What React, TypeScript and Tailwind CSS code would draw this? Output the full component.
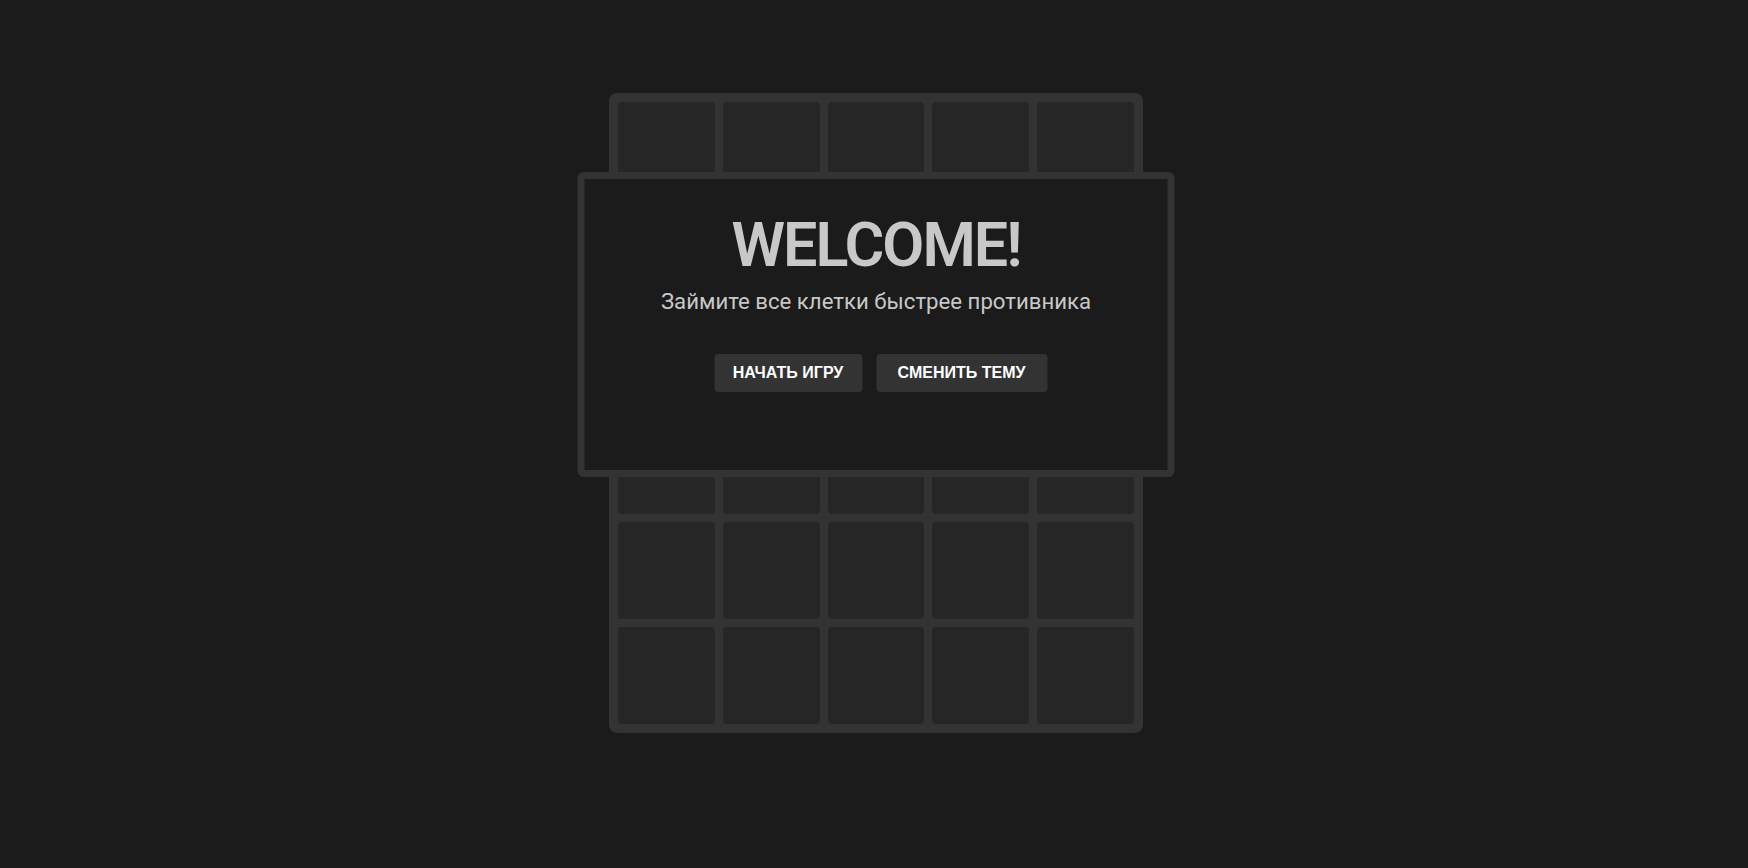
import React from 'react';

const rows = 6;
const cols = 5;

const App: React.FC = () => {
  const cells = Array.from({ length: rows * cols }, (_, i) => i);

  return (
    <div
      className="min-h-screen w-full bg-[#1b1b1b] flex justify-center pl-[4px]"
      style={{ fontFamily: 'Roboto, "Noto Sans", sans-serif' }}
    >
      <div className="relative mt-[93px]">
        {/* Board */}
        <div className="grid grid-cols-5 gap-2 p-[9px] bg-[#333333] rounded-lg w-[534px]">
          {cells.map((i) => (
            <div key={i} className="h-[97px] rounded bg-[#262626]" />
          ))}
        </div>

        {/* Welcome modal */}
        <div className="absolute top-[79px] left-1/2 -translate-x-1/2 w-[597px] h-[305px] bg-[#1b1b1b] border-[7px] border-[#333333] rounded-md flex flex-col items-center">
          <h1 className="mt-[30px] text-[61px] leading-[72px] font-semibold tracking-[-2px] text-[#c8c8c8]">
            WELCOME!
          </h1>
          <p className="mt-[5px] text-[22.2px] leading-[30px] text-[#c8c8c8]">
            Займите все клетки быстрее противника
          </p>
          <div className="mt-[38px] ml-[9px] flex gap-[14px]">
            <button
              className="h-[38px] w-[148px] rounded bg-[#333333] text-white text-[16px] font-bold uppercase"
              style={{ fontFamily: '"Liberation Sans", Arial, sans-serif' }}
            >
              Начать игру
            </button>
            <button
              className="h-[38px] w-[171px] rounded bg-[#333333] text-white text-[16px] font-bold uppercase"
              style={{ fontFamily: '"Liberation Sans", Arial, sans-serif' }}
            >
              Сменить тему
            </button>
          </div>
        </div>
      </div>
    </div>
  );
};

export default App;
